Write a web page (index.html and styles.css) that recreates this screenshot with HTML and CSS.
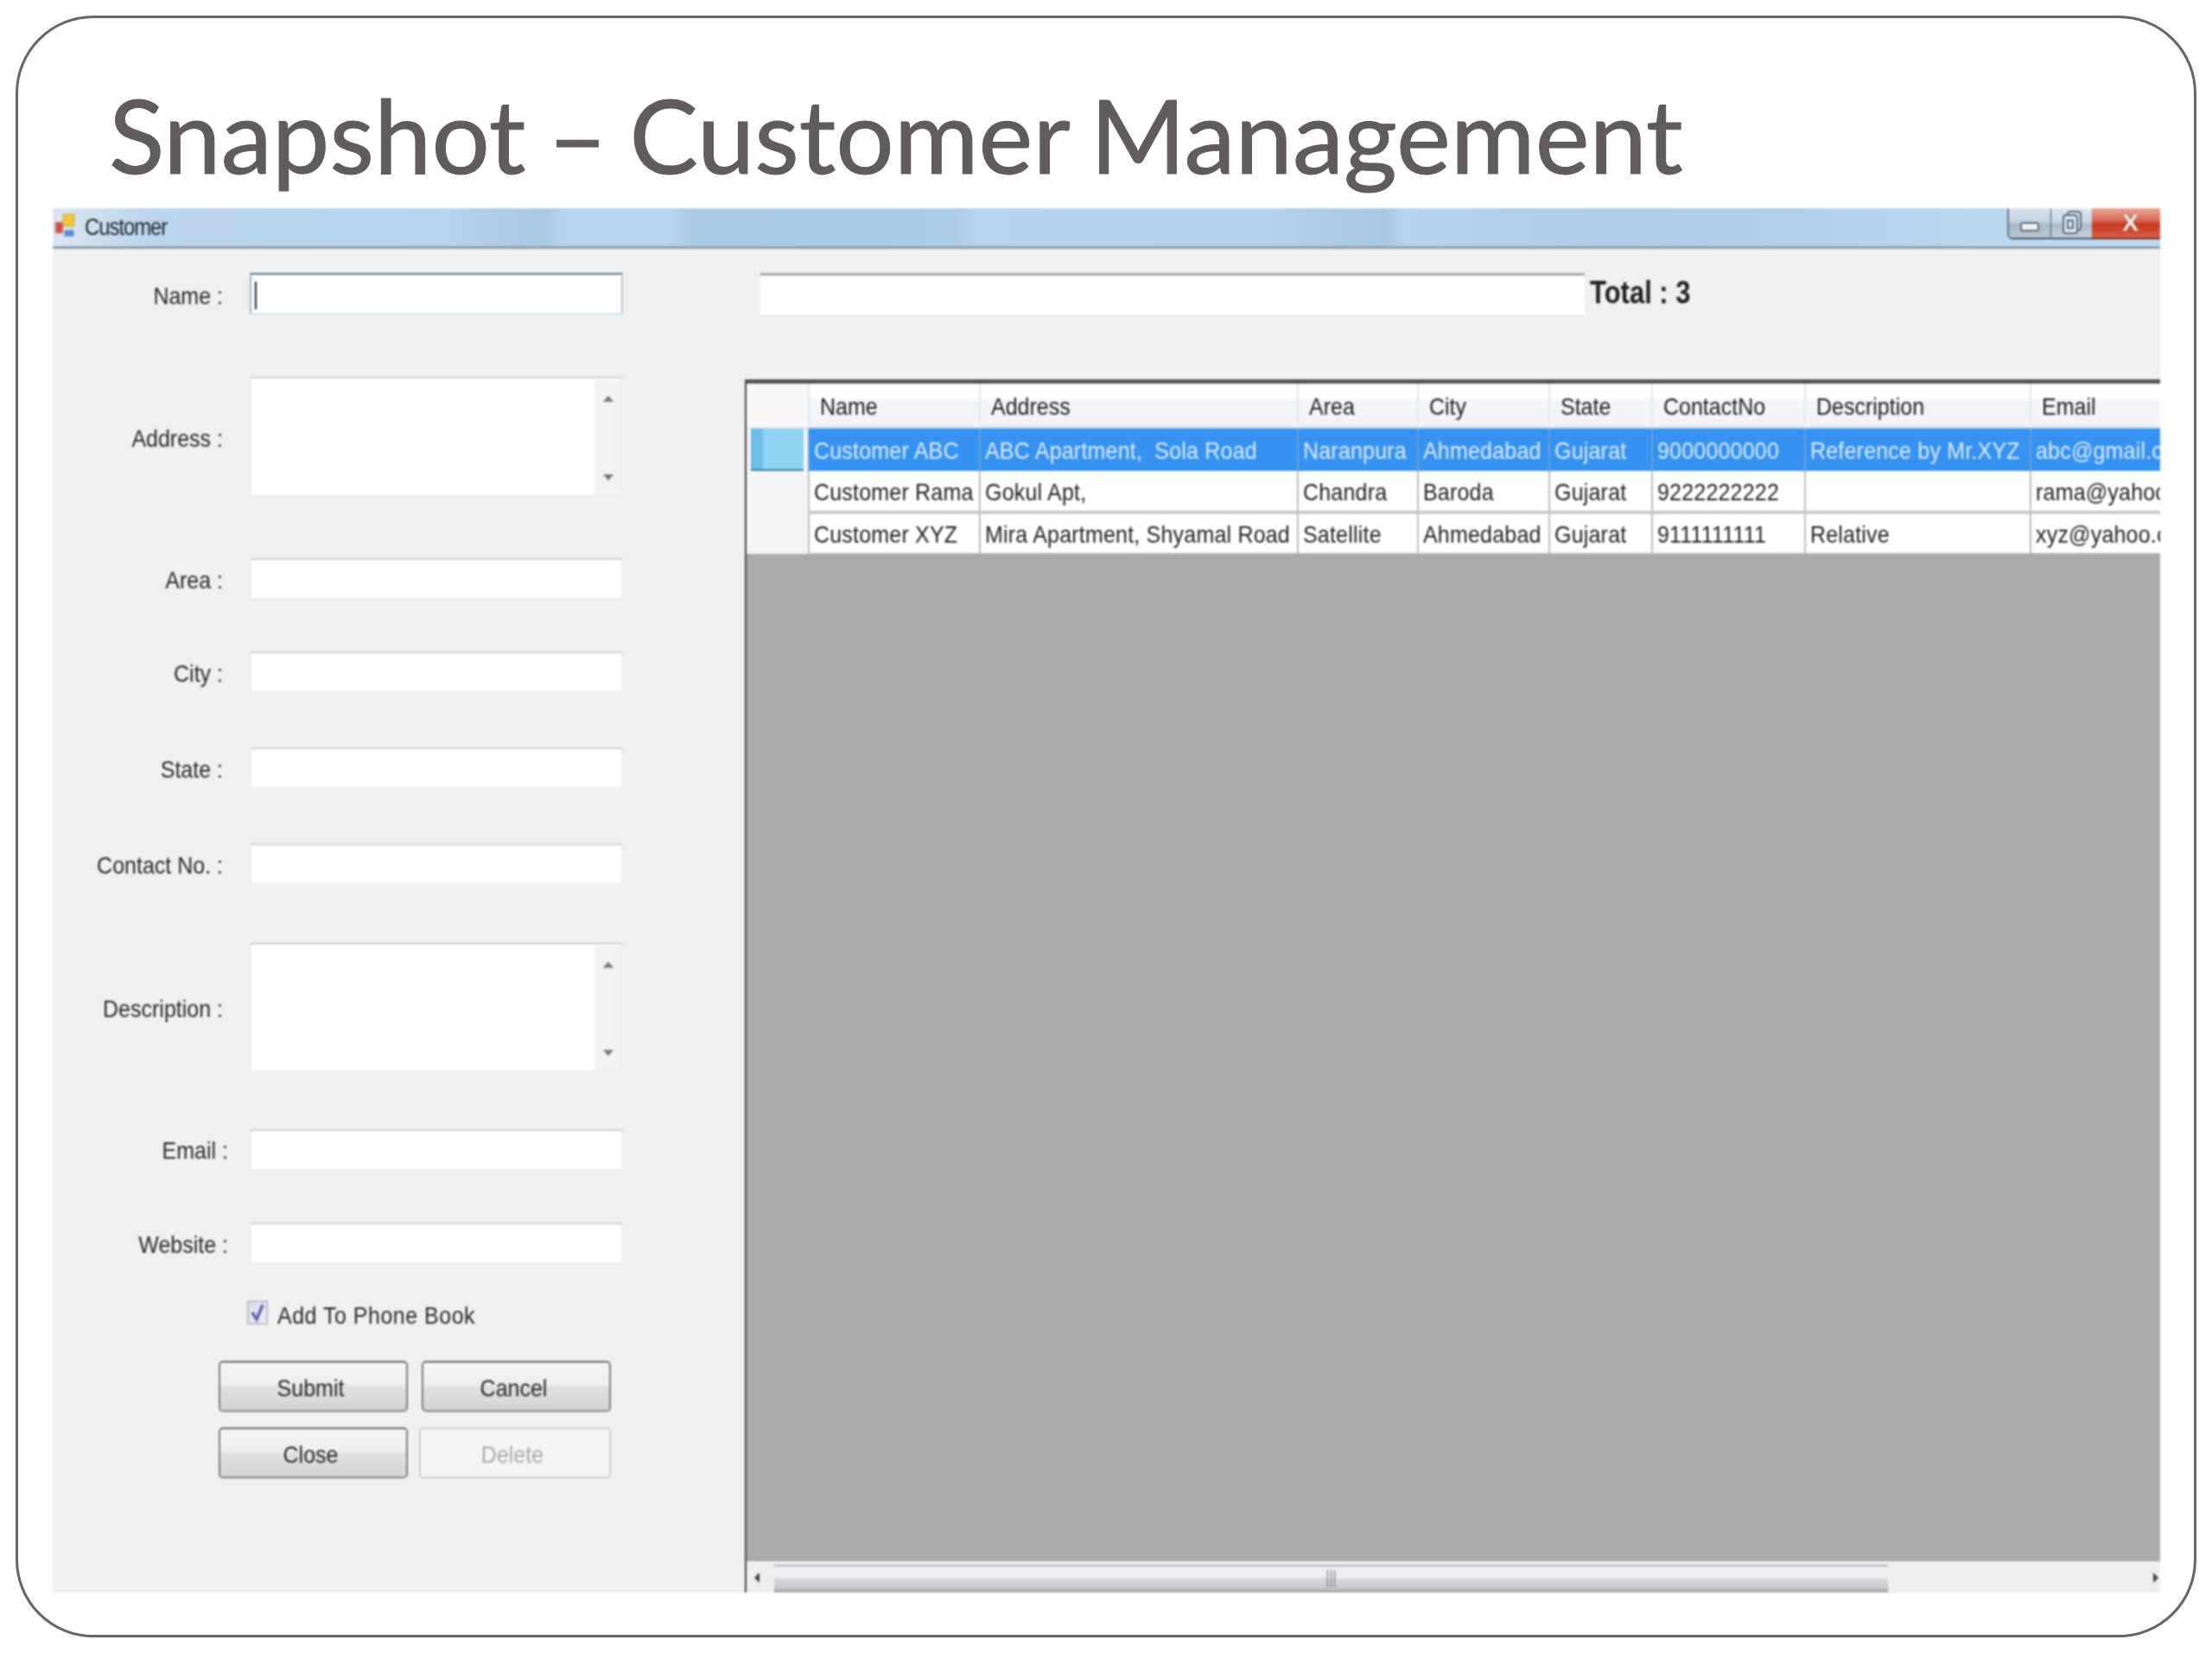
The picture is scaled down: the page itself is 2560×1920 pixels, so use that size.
FILE: index.html
```html
<!DOCTYPE html>
<html lang="en">
	<head>
		<meta charset="UTF-8" />
		<title>Snapshot - Customer Management</title>
		<link rel="stylesheet" href="styles.css">
	</head>
	<body>
		<div class="slide">
			<h1 class="slide-title">Snapshot – Customer Management</h1>

			<div class="window">
				<div class="titlebar">
					<svg class="app-icon" width="24" height="28" viewBox="0 0 24 28">
						<rect x="10" y="1" width="13" height="14" fill="#f0c83c" stroke="#c4a548" />
						<rect x="1" y="10" width="9" height="13" fill="#c9534a" stroke="#d8a8a0" />
						<rect x="11" y="19" width="12" height="8" fill="#5b8fd0" stroke="#c8d8e8" />
					</svg>
					<span class="window-name">Customer</span>
					<div class="caption-buttons">
						<div class="cap cap-min"><span class="min-glyph"></span></div>
						<div class="cap cap-max">
							<svg width="24" height="28" viewBox="0 0 24 28">
								<rect x="7" y="1" width="15" height="21" rx="3" fill="#dfe6ee" stroke="#5f6b78" stroke-width="2" />
								<rect x="2" y="5" width="16" height="21" rx="3" fill="#dfe6ee" stroke="#5f6b78" stroke-width="2" />
								<rect x="7" y="11" width="6" height="9" fill="none" stroke="#5f6b78" stroke-width="2" />
							</svg>
						</div>
						<div class="cap cap-close">X</div>
					</div>
				</div>

				<div class="window-body">
					<div class="form">
						<div class="field f-name">
							<label>Name :</label>
							<div class="box box-focus"><span class="caret"></span></div>
						</div>
						<div class="field f-address">
							<label>Address :</label>
							<div class="box box-multi">
								<div class="vscroll"><span class="arrow-up"></span><span class="arrow-down"></span></div>
							</div>
						</div>
						<div class="field f-area">
							<label>Area :</label>
							<div class="box"></div>
						</div>
						<div class="field f-city">
							<label>City :</label>
							<div class="box"></div>
						</div>
						<div class="field f-state">
							<label>State :</label>
							<div class="box"></div>
						</div>
						<div class="field f-contact">
							<label>Contact No. :</label>
							<div class="box"></div>
						</div>
						<div class="field f-desc">
							<label>Description :</label>
							<div class="box box-multi">
								<div class="vscroll"><span class="arrow-up"></span><span class="arrow-down"></span></div>
							</div>
						</div>
						<div class="field f-email">
							<label class="label-wide">Email :</label>
							<div class="box"></div>
						</div>
						<div class="field f-website">
							<label class="label-wide">Website :</label>
							<div class="box"></div>
						</div>

						<div class="phone-book">
							<span class="check">
								<svg width="20" height="24" viewBox="0 0 20 24">
									<path d="M4 12 L9 20 L16 3" fill="none" stroke="#6466a8" stroke-width="3.5" />
								</svg>
							</span>
							<span class="tall">Add To Phone Book</span>
						</div>

						<div class="buttons">
							<div class="btn"><span class="tall">Submit</span></div>
							<div class="btn"><span class="tall">Cancel</span></div>
							<div class="btn"><span class="tall">Close</span></div>
							<div class="btn btn-disabled"><span class="tall">Delete</span></div>
						</div>
					</div>

					<div class="list-side">
						<div class="search-row">
							<div class="search-box"></div>
							<span class="total">Total : 3</span>
						</div>

						<div class="grid">
							<div class="row row-head">
								<div class="corner"></div>
								<div class="cell"><span class="tall">Name</span></div>
								<div class="cell"><span class="tall">Address</span></div>
								<div class="cell"><span class="tall">Area</span></div>
								<div class="cell"><span class="tall">City</span></div>
								<div class="cell"><span class="tall">State</span></div>
								<div class="cell"><span class="tall">ContactNo</span></div>
								<div class="cell"><span class="tall">Description</span></div>
								<div class="cell"><span class="tall">Email</span></div>
							</div>
							<div class="row row-selected">
								<div class="row-header"><span class="row-mark"></span></div>
								<div class="cell"><span class="tall">Customer ABC</span></div>
								<div class="cell"><span class="tall">ABC Apartment,  Sola Road</span></div>
								<div class="cell"><span class="tall">Naranpura</span></div>
								<div class="cell"><span class="tall">Ahmedabad</span></div>
								<div class="cell"><span class="tall">Gujarat</span></div>
								<div class="cell"><span class="tall">9000000000</span></div>
								<div class="cell"><span class="tall">Reference by Mr.XYZ</span></div>
								<div class="cell"><span class="tall">abc@gmail.com</span></div>
							</div>
							<div class="row row-two">
								<div class="row-header"></div>
								<div class="cell"><span class="tall">Customer Rama</span></div>
								<div class="cell"><span class="tall">Gokul Apt,</span></div>
								<div class="cell"><span class="tall">Chandra</span></div>
								<div class="cell"><span class="tall">Baroda</span></div>
								<div class="cell"><span class="tall">Gujarat</span></div>
								<div class="cell"><span class="tall">9222222222</span></div>
								<div class="cell"></div>
								<div class="cell"><span class="tall">rama@yahoo.com</span></div>
							</div>
							<div class="row row-three">
								<div class="row-header"></div>
								<div class="cell"><span class="tall">Customer XYZ</span></div>
								<div class="cell"><span class="tall">Mira Apartment, Shyamal Road</span></div>
								<div class="cell"><span class="tall">Satellite</span></div>
								<div class="cell"><span class="tall">Ahmedabad</span></div>
								<div class="cell"><span class="tall">Gujarat</span></div>
								<div class="cell"><span class="tall">9111111111</span></div>
								<div class="cell"><span class="tall">Relative</span></div>
								<div class="cell"><span class="tall">xyz@yahoo.com</span></div>
							</div>

							<div class="grid-empty"></div>

							<div class="hscroll">
								<span class="arrow-left"></span>
								<div class="thumb"><span class="grip"></span></div>
								<span class="arrow-right"></span>
							</div>
						</div>
					</div>
				</div>
			</div>
		</div>
	</body>
</html>
```

FILE: styles.css
```css
* {
	box-sizing: border-box;
}

body {
	margin: 0;
	background: #fff;
	font-family: 'Liberation Sans', Arial, sans-serif;
}

.slide {
	width: 2524px;
	height: 1877px;
	margin: 18px 0 0 18px;
	padding: 0 39px 0 40px;
	border: 3px solid #666;
	border-radius: 90px;
}

.slide-title {
	height: 220px;
	margin: 0;
	padding: 69px 0 0 65px;
	font-family: Lato, sans-serif;
	font-weight: 400;
	font-size: 119px;
	line-height: 130px;
	word-spacing: -5px;
	color: #605c5c;
	-webkit-text-stroke: 1px #605c5c;
	white-space: nowrap;
}

.window {
	height: 1602px;
	display: flex;
	flex-direction: column;
	background: #f0f0f0;
	filter: blur(0.9px);
}

/* the screenshot was stretched, text comes out taller than it is wide */
.tall,
.field label {
	display: inline-block;
	transform: scaleY(1.12);
}

.titlebar {
	height: 47px;
	flex: none;
	display: flex;
	align-items: flex-start;
	border-bottom: 3px solid #8f9fae;
	background: linear-gradient(90deg, #dbe6f1 0, #bcd5ec 110px, #b8d3ec 454px, #abc8e2 570px, #b8d4ec 590px, #b8d4ec 715px, #adcae4 740px, #afcce6 1045px, #b8d4ec 1070px, #b6d2ea 1410px, #aac7e1 1540px, #b8d4ec 1565px, #b1cde7 1800px, #b4d0e9 2000px, #bcd8ef 2260px);
}

.app-icon {
	margin: 6px 0 0 2px;
}

.window-name {
	display: inline-block;
	margin: 7px 0 0 11px;
	font-size: 24px;
	line-height: 30px;
	letter-spacing: -1.1px;
	color: #1f2a34;
	transform: scaleY(1.15);
}

.caption-buttons {
	display: flex;
	height: 36px;
	margin-left: auto;
}

.cap {
	display: flex;
	align-items: center;
	justify-content: center;
	border-bottom: 2px solid #4b5a68;
}

.cap-min {
	width: 51px;
	border-left: 2px solid #6d7b88;
	border-right: 1px solid #4f5c68;
	border-bottom-left-radius: 6px;
	background: linear-gradient(#d7e2ec 0, #c6d3df 45%, #a9b9c8 55%, #b9c7d4 100%);
}

.min-glyph {
	width: 22px;
	height: 11px;
	margin-top: 8px;
	background: #eef1f4;
	border: 2px solid #5f6b78;
	border-radius: 3px;
}

.cap-max {
	width: 47px;
	background: linear-gradient(#dbe5ee 0, #cbd7e2 45%, #adbdcb 55%, #c3d0dc 100%);
}

.cap-close {
	width: 79px;
	padding-left: 10px;
	font-weight: 700;
	font-size: 28px;
	color: #f1ece8;
	text-shadow: 0 0 2px #5a4a48;
	border-bottom-color: #7a2a1c;
	background: linear-gradient(#e8a493 0, #d9705a 40%, #c8371d 55%, #d9604a 100%);
}

.window-body {
	flex: 1;
	min-height: 0;
	display: flex;
}

.form {
	width: 801px;
	flex: none;
	font-size: 25px;
	color: #2a2a2a;
}

.field {
	display: flex;
	align-items: center;
}

.field label {
	width: 197px;
	margin-right: 31px;
	padding-top: 2px;
	text-align: right;
	white-space: nowrap;
}

.field .label-wide {
	width: 203px;
	margin-right: 25px;
}

.f-name label {
	padding-top: 4px;
}

.box {
	position: relative;
	width: 432px;
	height: 48px;
	background: #fff;
	border: 2px solid #eaecee;
	border-top-color: #ced1d6;
}

.box-focus {
	border-color: #d5e3ee;
	border-top-color: #56748f;
	border-left-color: #9fb6c8;
	border-right-color: #b5c9d8;
}

.caret {
	position: absolute;
	left: 4px;
	top: 8px;
	width: 2px;
	height: 32px;
	background: #222;
}

.box-multi {
	height: 100%;
}

.vscroll {
	position: absolute;
	right: 0;
	top: 2px;
	bottom: 0;
	width: 31px;
	display: flex;
	flex-direction: column;
	align-items: center;
	justify-content: space-between;
	padding: 18px 0 17px;
	background: #f2f2f2;
}

.arrow-up {
	border: 6px solid transparent;
	border-top: 0;
	border-bottom: 7px solid #777;
}

.arrow-down {
	border: 6px solid transparent;
	border-bottom: 0;
	border-top: 7px solid #777;
}

.f-name { margin-top: 28px; height: 48px; }
.f-address { margin-top: 72px; height: 139px; }
.f-area { margin-top: 71px; height: 48px; }
.f-city { margin-top: 60px; height: 48px; }
.f-state { margin-top: 63px; height: 48px; }
.f-contact { margin-top: 63px; height: 48px; }
.f-desc { margin-top: 67px; height: 150px; }
.f-email { margin-top: 65px; height: 49px; }
.f-website { margin-top: 60px; height: 48px; }

.f-address label {
	padding-top: 4px;
}

.phone-book {
	display: flex;
	align-items: center;
	margin: 42px 0 0 225px;
	height: 28px;
}

.phone-book .tall {
	padding-top: 6px;
	letter-spacing: 0.5px;
}

.check {
	width: 24px;
	height: 28px;
	margin-right: 11px;
	display: flex;
	align-items: center;
	justify-content: center;
	border: 2px solid #c0c0c8;
	background: linear-gradient(135deg, #d8dbe9, #eceef6);
}

.buttons {
	display: grid;
	grid-template-columns: 219px 219px;
	grid-auto-rows: 59px;
	column-gap: 16px;
	row-gap: 18px;
	margin: 42px 0 0 192px;
}

.btn {
	display: flex;
	align-items: center;
	justify-content: center;
	padding: 3px 6px 0 0;
	border: 2px solid #7c7c7c;
	border-top-color: #666;
	border-bottom-color: #888;
	border-radius: 5px;
	background: linear-gradient(#f5f5f5 0, #efefef 45%, #e0e0e0 52%, #d4d4d4 100%);
	color: #2a2a2a;
}

.btn-disabled {
	margin-left: -3px;
	border-color: #cfcfcf;
	background: #f4f4f4;
	color: #ababab;
}

.list-side {
	flex: 1;
	min-width: 0;
	display: flex;
	flex-direction: column;
}

.search-row {
	height: 151px;
	flex: none;
	display: flex;
	align-items: flex-start;
	padding: 28px 0 0 18px;
}

.search-box {
	width: 954px;
	height: 48px;
	background: #fff;
	border: 0 solid #eaecee;
	border-top: 3px solid #a5a8ac;
}

.total {
	display: inline-block;
	margin: 2px 0 0 6px;
	font-weight: 700;
	font-size: 31px;
	line-height: 42px;
	color: #222;
	transform: scaleY(1.2);
}

.grid {
	flex: 1;
	min-height: 0;
	display: flex;
	flex-direction: column;
	border-top: 5px solid #555;
	border-left: 2px solid #444;
	background: #ababab;
	font-size: 25px;
	overflow: hidden;
}

.row {
	display: grid;
	grid-template-columns: 71px 198px 368px 139px 152px 119px 177px 261px 200px;
	flex: none;
	width: 1700px;
	background: #fff;
	color: #222;
}

.cell {
	display: flex;
	align-items: center;
	padding: 2px 0 0 5px;
	border-left: 2px solid #bdbdbd;
	letter-spacing: 0.2px;
	white-space: pre;
	overflow: hidden;
}

.row-head {
	height: 52px;
	background: linear-gradient(#fff 0, #fff 30%, #f3f5f8 40%, #f1f3f6 100%);
}

.row-head .cell {
	padding-left: 12px;
	letter-spacing: 0;
	border-left-color: #e2e6ec;
	border-bottom: 2px solid #d0d4da;
}

.corner {
	background: #f7f8f9;
	border-bottom: 2px solid #e4e6e8;
}

.row-header {
	background: #f5f5f6;
}

.row-selected {
	height: 49px;
	background: #3592f0;
	color: #dcecff;
}

.row-selected .row-header {
	padding: 0 5px;
}

.row-mark {
	display: block;
	height: 100%;
	background: linear-gradient(90deg, #6cbde8 0, #6cbde8 22%, #8fd2f2 24%, #8fd2f2 100%);
	border-bottom: 2px solid #3a7ea8;
}

.row-selected .cell {
	border-left-color: #6aa0d8;
}

.row-two {
	height: 50px;
}

.row-two .cell {
	border-bottom: 4px solid #cacaca;
}

.row-three {
	height: 46px;
}

.row-three .cell {
	border-bottom: 1px solid #bbb;
}

.grid-empty {
	flex: 1;
}

.hscroll {
	flex: none;
	height: 36px;
	display: flex;
	align-items: stretch;
	position: relative;
	padding-top: 3px;
	background: #eeeeee;
	border-top: 1px solid #f8f8f8;
}

.thumb {
	width: 1289px;
	margin-left: 32px;
	display: flex;
	align-items: center;
	justify-content: center;
	border-top: 2px solid #b4b4b4;
	border-bottom: 2px solid #a0a0a0;
	background: linear-gradient(#f0f0f4 0, #ececf0 45%, #d6d6da 55%, #cacace 85%, #b8b8bc 100%);
}

.grip {
	width: 9px;
	height: 20px;
	border-left: 1px solid #666;
	border-right: 1px solid #666;
	background: linear-gradient(90deg, transparent 40%, #666 40%, #666 60%, transparent 60%);
}

.arrow-left,
.arrow-right {
	position: absolute;
	top: 12px;
	border: 6px solid transparent;
}

.arrow-left {
	left: 9px;
	border-left: 0;
	border-right: 6px solid #444;
}

.arrow-right {
	right: 2px;
	border-right: 0;
	border-left: 6px solid #444;
}
```
